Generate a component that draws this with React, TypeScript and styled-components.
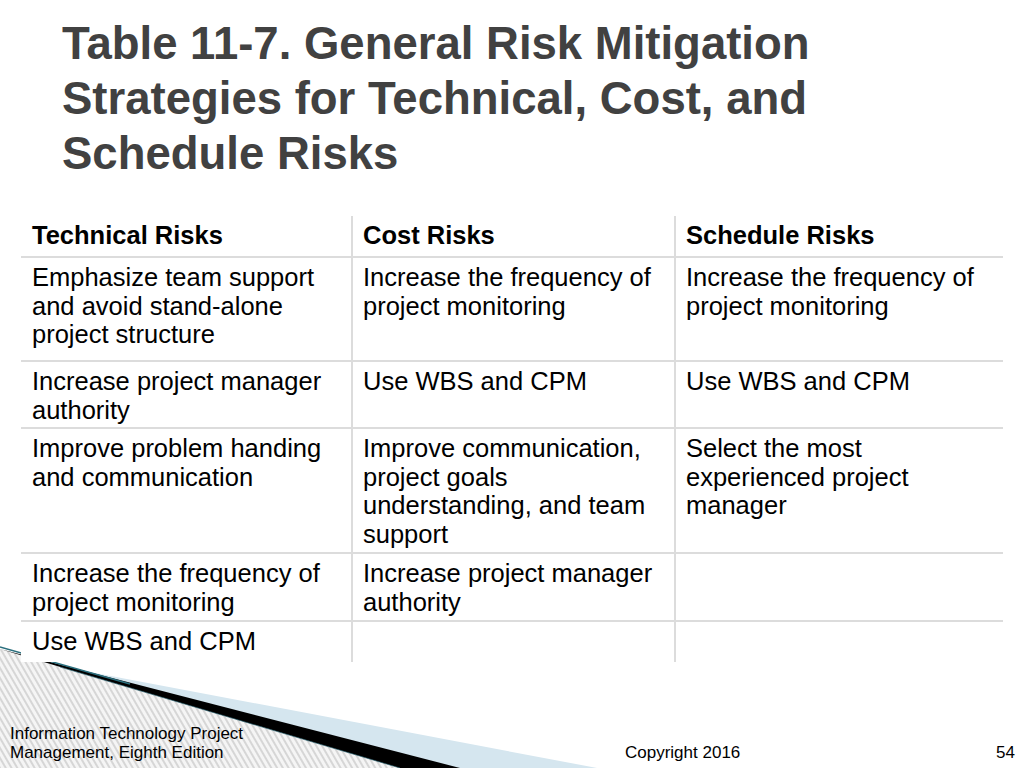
import React from "react";
import styled, { createGlobalStyle } from "styled-components";

const Global = createGlobalStyle`
  html, body { margin: 0; padding: 0; background: #ffffff; }
  body { font-family: "Liberation Sans", Arial, sans-serif; }
`;

const Slide = styled.div`
  position: relative;
  width: 1024px;
  height: 768px;
  overflow: hidden;
  background: #ffffff;
  display: flex;
  flex-direction: column;
  font-family: "Liberation Sans", Arial, sans-serif;
`;

const Decoration = styled.svg`
  position: absolute;
  left: 0;
  bottom: 0;
  width: 1024px;
  height: 130px;
  z-index: 0;
`;

const Title = styled.h1`
  position: relative;
  z-index: 1;
  margin: 0;
  padding: 16px 0 0 62px;
  max-width: 775px;
  font-size: 45.5px;
  line-height: 55px;
  font-weight: 700;
  color: #414141;
`;

const Table = styled.div`
  position: relative;
  z-index: 1;
  margin: 35px 0 0 21px;
  width: 982px;
  display: grid;
  grid-template-columns: 330px 323px 329px;
  grid-template-rows: 42px 104px 67px 125px 68px 40px;
`;

const Cell = styled.div<{ $col: number; $last?: boolean; $head?: boolean }>`
  box-sizing: border-box;
  background: #ffffff;
  padding: 5px 8px 0 ${(p) => (p.$col === 0 ? 11 : 10)}px;
  border-left: ${(p) => (p.$col === 0 ? "none" : "2px solid #dcdcdc")};
  border-bottom: ${(p) => (p.$last ? "none" : "2px solid #dcdcdc")};
  font-size: 25.5px;
  line-height: 28.7px;
  font-weight: ${(p) => (p.$head ? 700 : 400)};
  color: #000000;
`;

const Footer = styled.div`
  position: relative;
  z-index: 1;
  margin-top: auto;
  display: grid;
  grid-template-columns: 615px 1fr auto;
  align-items: end;
  padding: 0 9px 6px 10px;
  color: #000000;
`;

const Source = styled.div`
  font-size: 17px;
  line-height: 19px;
`;

const Copyright = styled.div`
  font-size: 17px;
  line-height: 19px;
`;

const PageNum = styled.div`
  font-size: 17px;
  line-height: 19px;
  justify-self: end;
`;

const rows: string[][] = [
  ["Technical Risks", "Cost Risks", "Schedule Risks"],
  [
    "Emphasize team support and avoid stand-alone project structure",
    "Increase the frequency of project monitoring",
    "Increase the frequency of project monitoring",
  ],
  ["Increase project manager authority", "Use WBS and CPM", "Use WBS and CPM"],
  [
    "Improve problem handing and communication",
    "Improve communication, project goals understanding, and team support",
    "Select the most experienced project manager",
  ],
  ["Increase the frequency of project monitoring", "Increase project manager authority", ""],
  ["Use WBS and CPM", "", ""],
];

export default function App() {
  return (
    <>
      <Global />
      <Slide>
        <Decoration viewBox="0 638 1024 130" preserveAspectRatio="none">
          <defs>
            <pattern
              id="hatch"
              patternUnits="userSpaceOnUse"
              width="5"
              height="5"
              patternTransform="rotate(-30)"
            >
              <rect width="5" height="5" fill="#f5f5f5" />
              <line x1="1" y1="0" x2="1" y2="5" stroke="#c2c2c2" strokeWidth="1.2" />
            </pattern>
          </defs>
          <polygon points="0,655 597,768 0,768" fill="#d5e6ef" />
          <polygon points="0,649 400,768 0,768" fill="url(#hatch)" />
          <polygon points="0,649 460,768 400,768" fill="#000000" />
          <line x1="0" y1="647" x2="130" y2="684" stroke="#2b6f7e" strokeWidth="1.4" />
          <line x1="60" y1="667" x2="400" y2="768" stroke="#1d5866" strokeWidth="1" opacity="0.6" />
        </Decoration>

        <Title>Table 11-7. General Risk Mitigation Strategies for Technical, Cost, and Schedule Risks</Title>

        <Table>
          {rows.map((row, r) =>
            row.map((text, c) => (
              <Cell key={`${r}-${c}`} $col={c} $head={r === 0} $last={r === rows.length - 1}>
                {text}
              </Cell>
            ))
          )}
        </Table>

        <Footer>
          <Source>
            Information Technology Project
            <br />
            Management, Eighth Edition
          </Source>
          <Copyright>Copyright 2016</Copyright>
          <PageNum>54</PageNum>
        </Footer>
      </Slide>
    </>
  );
}
